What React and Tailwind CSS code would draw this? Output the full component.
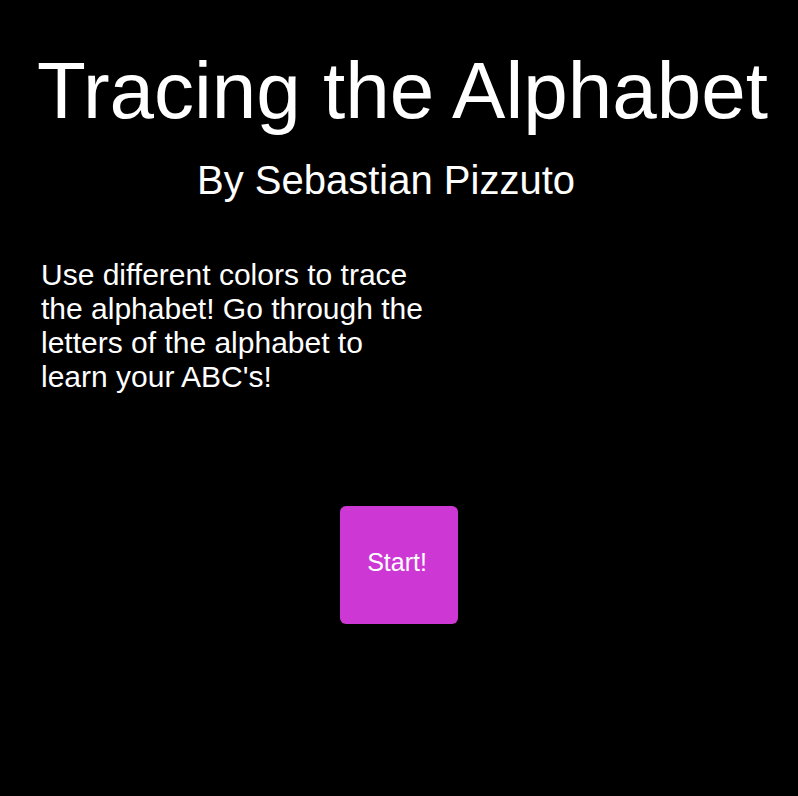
const App = () => (
  <div className="min-h-[796px] w-full bg-black text-white font-['Liberation_Sans',Arial,sans-serif]">
    <div className="flex flex-col pt-[51px]">
      <h1 className="pl-[37px] text-[80px] leading-none font-normal">Tracing the Alphabet</h1>
      <h2 className="mt-[29px] pl-[197px] text-[40px] leading-none font-normal">By Sebastian Pizzuto</h2>
      <p className="mt-[58px] ml-[41px] w-[388px] text-[30px] leading-[34px]">
        Use different colors to trace the alphabet! Go through the letters of the alphabet to learn your ABC's!
      </p>
      <div className="mt-[112px] pl-[340px]">
        <button
          type="button"
          className="flex h-[118px] w-[118px] items-center justify-center rounded-md bg-[#cd38d5] pb-[4px] pr-[4px] text-[25px] text-white"
        >
          Start!
        </button>
      </div>
    </div>
  </div>
)

export default App
